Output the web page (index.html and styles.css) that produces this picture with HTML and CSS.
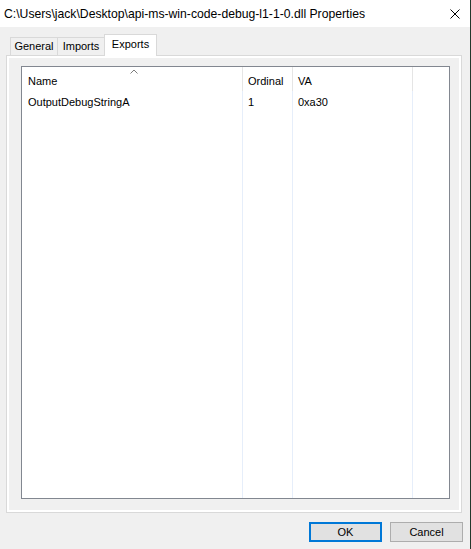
FILE: index.html
```html
<!DOCTYPE html>
<html>
<head>
<meta charset="utf-8">
<link rel="stylesheet" href="styles.css">
</head>
<body>
<div class="window">
  <div class="titlebar">
    <span class="title">C:\Users\jack\Desktop\api-ms-win-code-debug-l1-1-0.dll Properties</span>
    <svg class="close" width="10" height="10" viewBox="0 0 10 10"><path d="M0.5 0.5 L9.5 9.5 M9.5 0.5 L0.5 9.5" stroke="#000" stroke-width="1" fill="none"/></svg>
  </div>
  <div class="tabs">
    <div class="tab tab-general">General</div>
    <div class="tab tab-imports">Imports</div>
    <div class="tab tab-exports active">Exports</div>
  </div>
  <div class="panel">
    <div class="page">
      <div class="list">
        <div class="col col-name">
          <div class="hd">Name<svg class="sort" width="8" height="5" viewBox="0 0 8 5"><polyline points="0.5,4.5 4,1 7.5,4.5" fill="none" stroke="#7d7d7d" stroke-width="1"/></svg></div>
          <div class="cell">OutputDebugStringA</div>
        </div>
        <div class="col col-ord">
          <div class="hd">Ordinal</div>
          <div class="cell">1</div>
        </div>
        <div class="col col-va">
          <div class="hd">VA</div>
          <div class="cell">0xa30</div>
        </div>
        <div class="col col-fill">
          <div class="hd"></div>
        </div>
      </div>
    </div>
  </div>
  <div class="buttons">
    <button class="btn default">OK</button>
    <button class="btn">Cancel</button>
  </div>
</div>
</body>
</html>
```
FILE: styles.css
```css
html, body {
  margin: 0;
  padding: 0;
}
body {
  background: #f0f0f0;
  font-family: "Liberation Sans", Arial, sans-serif;
  font-size: 11px;
  color: #000;
}
.window {
  width: 470px;
  height: 549px;
  border-right: 1px solid #23382b;
  display: flex;
  flex-direction: column;
  overflow: hidden;
}
.titlebar {
  height: 27px;
  flex: none;
  background: #fff;
  display: flex;
  justify-content: space-between;
  align-items: flex-start;
}
.title {
  font-size: 12.2px;
  line-height: 26px;
  padding: 1px 0 0 4px;
  white-space: nowrap;
}
.close {
  margin: 9px 10px 0 0;
}
.tabs {
  height: 28px;
  flex: none;
  display: flex;
  align-items: flex-end;
  padding-left: 10px;
}
.tab {
  height: 18px;
  box-sizing: border-box;
  border: 1px solid #d9d9d9;
  border-bottom: 0;
  background: #f0f0f0;
  line-height: 17px;
  text-align: center;
  white-space: nowrap;
}
.tab + .tab {
  margin-left: -1px;
}
.tab-general { width: 48px; }
.tab-imports { width: 48px; }
.tab-exports { width: 53px; }
.tab.active {
  height: 22px;
  margin-bottom: -1px;
  padding-top: 1px;
  background: #fff;
  position: relative;
  z-index: 1;
}
.panel {
  margin-left: 6px;
  width: 456px;
  height: 458px;
  flex: none;
  box-sizing: border-box;
  border: 1px solid #d9d9d9;
  background: #fff;
  padding: 2px;
  display: flex;
}
.page {
  flex: 1;
  background: #f0f0f0;
  padding: 8px 9px 11px 12px;
  display: flex;
}
.list {
  flex: 1;
  border: 1px solid #828790;
  background: #fff;
  display: flex;
}
.col {
  display: flex;
  flex-direction: column;
  box-sizing: border-box;
  border-right: 1px solid #e6eefa;
  flex: none;
}
.col-name { width: 221px; }
.col-ord { width: 50px; }
.col-va { width: 120px; }
.col-fill { flex: 1; border-right: 0; }
.hd {
  height: 24px;
  box-sizing: border-box;
  padding: 4px 0 0 6px;
  line-height: 20px;
  margin-right: -1px;
  border-right: 1px solid #e5e5e5;
  white-space: nowrap;
  position: relative;
}
.col-fill .hd {
  border-right: 0;
  margin-right: 0;
}
.cell {
  padding: 2px 0 0 6px;
  line-height: 18px;
  white-space: nowrap;
}
.col-ord .hd, .col-ord .cell,
.col-va .hd, .col-va .cell {
  padding-left: 5px;
}
.sort {
  position: absolute;
  left: 108px;
  top: 2px;
}
.buttons {
  flex: none;
  display: flex;
  justify-content: flex-end;
  gap: 8px;
  padding: 9px 7px 0 0;
}
.btn {
  width: 73px;
  height: 20px;
  box-sizing: border-box;
  border: 1px solid #adadad;
  background: #e1e1e1;
  font-family: "Liberation Sans", Arial, sans-serif;
  font-size: 11px;
  color: #000;
  padding: 0;
  margin: 0;
  border-radius: 0;
}
.btn.default {
  border: 2px solid #0078d7;
}
```
